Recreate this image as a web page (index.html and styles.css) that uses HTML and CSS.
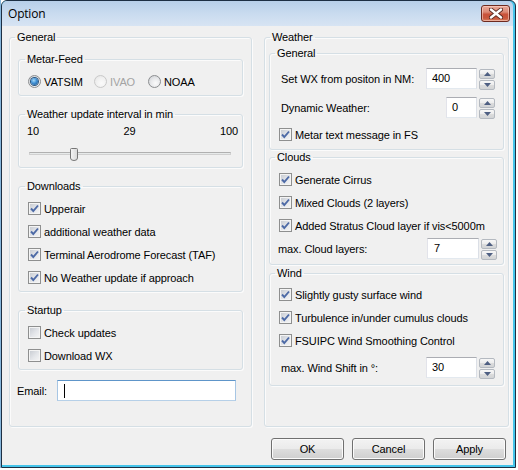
FILE: index.html
```html
<!DOCTYPE html>
<html>
<head>
<meta charset="utf-8">
<title>Option</title>
<link rel="stylesheet" href="styles.css">
</head>
<body>
<div class="window">
  <div class="frame">
    <div class="titlebar">
      <span class="title">Option</span>
      <div class="close">
        <svg width="14" height="11" viewBox="0 0 14 11">
          <path d="M2 1.5 L12 9.5 M12 1.5 L2 9.5" stroke="#5b2a22" stroke-width="4.2" stroke-linecap="round"/>
          <path d="M2 1.5 L12 9.5 M12 1.5 L2 9.5" stroke="#ffffff" stroke-width="2.4" stroke-linecap="round"/>
        </svg>
      </div>
    </div>
    <div class="client">
      <div class="columns">
        <fieldset class="group main general">
          <legend>General</legend>

          <fieldset class="group sub metar">
            <legend>Metar-Feed</legend>
            <div class="radios">
              <div class="opt o-vatsim"><span class="radio on"></span><span>VATSIM</span></div>
              <div class="opt o-ivao disabled"><span class="radio"></span><span>IVAO</span></div>
              <div class="opt"><span class="radio"></span><span>NOAA</span></div>
            </div>
          </fieldset>

          <fieldset class="group sub interval">
            <legend>Weather update interval in min</legend>
            <div class="scale"><span>10</span><span>29</span><span>100</span></div>
            <div class="slider">
              <div class="track"></div>
              <div class="thumb">
                <svg width="8" height="13" viewBox="0 0 8 13">
                  <defs>
                    <linearGradient id="tg" x1="0" y1="0" x2="1" y2="0">
                      <stop offset="0" stop-color="#f6f6f6"/>
                      <stop offset="1" stop-color="#d8d8d8"/>
                    </linearGradient>
                  </defs>
                  <path d="M1.5 0.5 H6.5 A1 1 0 0 1 7.5 1.5 V10 Q7.5 12.5 4 12.5 Q0.5 12.5 0.5 10 V1.5 A1 1 0 0 1 1.5 0.5 Z" fill="url(#tg)" stroke="#767676"/>
                </svg>
              </div>
            </div>
          </fieldset>

          <fieldset class="group sub downloads">
            <legend>Downloads</legend>
            <div class="check"><span class="cb on"><svg width="11" height="11" viewBox="0 0 11 11"><path d="M2 5.5 L4.3 8 L9 2.5" fill="none" stroke="#4d6aa6" stroke-width="1.9"/></svg></span><span>Upperair</span></div>
            <div class="check"><span class="cb on"><svg width="11" height="11" viewBox="0 0 11 11"><path d="M2 5.5 L4.3 8 L9 2.5" fill="none" stroke="#4d6aa6" stroke-width="1.9"/></svg></span><span>additional weather data</span></div>
            <div class="check"><span class="cb on"><svg width="11" height="11" viewBox="0 0 11 11"><path d="M2 5.5 L4.3 8 L9 2.5" fill="none" stroke="#4d6aa6" stroke-width="1.9"/></svg></span><span>Terminal Aerodrome Forecast (TAF)</span></div>
            <div class="check"><span class="cb on"><svg width="11" height="11" viewBox="0 0 11 11"><path d="M2 5.5 L4.3 8 L9 2.5" fill="none" stroke="#4d6aa6" stroke-width="1.9"/></svg></span><span>No Weather update if approach</span></div>
          </fieldset>

          <fieldset class="group sub startup">
            <legend>Startup</legend>
            <div class="check"><span class="cb"></span><span>Check updates</span></div>
            <div class="check"><span class="cb"></span><span>Download WX</span></div>
          </fieldset>

          <div class="email-row">
            <span class="email-label">Email:</span>
            <div class="textbox focused email"><span class="caret"></span></div>
          </div>
        </fieldset>

        <fieldset class="group main weather">
          <legend>Weather</legend>

          <fieldset class="group sub wgeneral">
            <legend>General</legend>
            <div class="field-row first">
              <span class="flabel">Set WX from positon in NM:</span>
              <div class="numbox"><div class="textbox w51">400</div><div class="spin"><span class="sb"><svg width="7" height="4" viewBox="0 0 7 4"><path d="M0 4 L3.5 0 L7 4 Z"/></svg></span><span class="sb"><svg width="7" height="4" viewBox="0 0 7 4"><path d="M0 0 L3.5 4 L7 0 Z"/></svg></span></div></div>
            </div>
            <div class="field-row second">
              <span class="flabel">Dynamic Weather:</span>
              <div class="numbox"><div class="textbox w31">0</div><div class="spin"><span class="sb"><svg width="7" height="4" viewBox="0 0 7 4"><path d="M0 4 L3.5 0 L7 4 Z"/></svg></span><span class="sb"><svg width="7" height="4" viewBox="0 0 7 4"><path d="M0 0 L3.5 4 L7 0 Z"/></svg></span></div></div>
            </div>
            <div class="check after-field"><span class="cb on"><svg width="11" height="11" viewBox="0 0 11 11"><path d="M2 5.5 L4.3 8 L9 2.5" fill="none" stroke="#4d6aa6" stroke-width="1.9"/></svg></span><span>Metar text message in FS</span></div>
          </fieldset>

          <fieldset class="group sub clouds">
            <legend>Clouds</legend>
            <div class="check"><span class="cb on"><svg width="11" height="11" viewBox="0 0 11 11"><path d="M2 5.5 L4.3 8 L9 2.5" fill="none" stroke="#4d6aa6" stroke-width="1.9"/></svg></span><span>Generate Cirrus</span></div>
            <div class="check"><span class="cb on"><svg width="11" height="11" viewBox="0 0 11 11"><path d="M2 5.5 L4.3 8 L9 2.5" fill="none" stroke="#4d6aa6" stroke-width="1.9"/></svg></span><span>Mixed Clouds (2 layers)</span></div>
            <div class="check"><span class="cb on"><svg width="11" height="11" viewBox="0 0 11 11"><path d="M2 5.5 L4.3 8 L9 2.5" fill="none" stroke="#4d6aa6" stroke-width="1.9"/></svg></span><span>Added Stratus Cloud layer if vis&lt;5000m</span></div>
            <div class="field-row cloud-row">
              <span class="flabel tight">max. Cloud layers:</span>
              <div class="numbox shifted"><div class="textbox w52">7</div><div class="spin"><span class="sb"><svg width="7" height="4" viewBox="0 0 7 4"><path d="M0 4 L3.5 0 L7 4 Z"/></svg></span><span class="sb"><svg width="7" height="4" viewBox="0 0 7 4"><path d="M0 0 L3.5 4 L7 0 Z"/></svg></span></div></div>
            </div>
          </fieldset>

          <fieldset class="group sub wind">
            <legend>Wind</legend>
            <div class="check"><span class="cb on"><svg width="11" height="11" viewBox="0 0 11 11"><path d="M2 5.5 L4.3 8 L9 2.5" fill="none" stroke="#4d6aa6" stroke-width="1.9"/></svg></span><span>Slightly gusty surface wind</span></div>
            <div class="check"><span class="cb on"><svg width="11" height="11" viewBox="0 0 11 11"><path d="M2 5.5 L4.3 8 L9 2.5" fill="none" stroke="#4d6aa6" stroke-width="1.9"/></svg></span><span>Turbulence in/under cumulus clouds</span></div>
            <div class="check"><span class="cb on"><svg width="11" height="11" viewBox="0 0 11 11"><path d="M2 5.5 L4.3 8 L9 2.5" fill="none" stroke="#4d6aa6" stroke-width="1.9"/></svg></span><span>FSUIPC Wind Smoothing Control</span></div>
            <div class="field-row wind-row">
              <span class="flabel">max. Wind Shift in °:</span>
              <div class="numbox"><div class="textbox w51">30</div><div class="spin"><span class="sb"><svg width="7" height="4" viewBox="0 0 7 4"><path d="M0 4 L3.5 0 L7 4 Z"/></svg></span><span class="sb"><svg width="7" height="4" viewBox="0 0 7 4"><path d="M0 0 L3.5 4 L7 0 Z"/></svg></span></div></div>
            </div>
          </fieldset>
        </fieldset>
      </div>

      <div class="buttons">
        <div class="btn">OK</div>
        <div class="btn">Cancel</div>
        <div class="btn">Apply</div>
      </div>
    </div>
  </div>
</div>
</body>
</html>
```
FILE: styles.css
```css
html, body {
  margin: 0;
  padding: 0;
  background: #ffffff;
}

body {
  font-family: "Liberation Sans", Arial, sans-serif;
  font-size: 11px;
  letter-spacing: -0.1px;
  color: #000;
}

.window {
  width: 516px;
  height: 468px;
  box-sizing: border-box;
  border-left: 1px solid #86b6dc;
}

.frame {
  height: 100%;
  box-sizing: border-box;
  border: 1px solid #1d2f43;
  border-radius: 6px 6px 0 0;
  background: #45c4ea;
  padding: 0 2px 2px 0;
  display: flex;
  flex-direction: column;
}

.titlebar {
  height: 25px;
  flex: none;
  display: flex;
  justify-content: space-between;
  align-items: flex-start;
  background: linear-gradient(to bottom, #b7cfe9 0%, #c9dbef 50%, #d7e4f3 100%);
  border-radius: 5px 5px 0 0;
}

.title {
  font-family: "Open Sans", "Noto Sans", sans-serif;
  font-size: 12px;
  letter-spacing: -0.2px;
  line-height: 16px;
  margin: 5px 0 0 6px;
  color: #000;
}

.close {
  width: 29px;
  height: 17px;
  box-sizing: border-box;
  margin: 4px 3px 0 0;
  border: 1px solid #6e2a1f;
  border-radius: 3px;
  background: linear-gradient(to bottom, #e9a899 0%, #dc8a76 40%, #c9523a 55%, #c8563c 80%, #d77e5e 100%);
  box-shadow: inset 0 0 0 1px rgba(255, 220, 210, 0.55);
  display: flex;
  align-items: center;
  justify-content: center;
}

.client {
  flex: 1;
  background: #f0f0f0;
  padding: 5px 4px 0 7px;
  display: flex;
  flex-direction: column;
}

.columns {
  height: 396px;
  display: flex;
  gap: 12px;
}

.group {
  margin: 0;
  min-width: 0;
  border: 1px solid #d5dfe5;
  border-radius: 3px;
  box-shadow: inset 1px 1px 0 #fbfbfb, 1px 1px 0 #fbfbfb;
}

.group legend {
  padding: 0 2px;
  line-height: 13px;
  height: 13px;
}

.main.general {
  width: 243px;
  box-sizing: border-box;
  padding: 9px 8px 0 8px;
}

.main.general > legend {
  margin-left: -3px;
}

.main.weather {
  width: 245px;
  box-sizing: border-box;
  padding: 3px 4px 0 4px;
}

.main.weather > legend {
  margin-left: 1px;
}

.sub {
  padding: 0 4px 0 9px;
}

.general .sub > legend {
  margin-left: -3px;
}

.weather .sub > legend {
  margin-left: -4px;
}

.weather .sub {
  padding-right: 8px;
}

/* Metar feed */
.metar {
  padding-top: 7px;
  padding-bottom: 5px;
}

.radios {
  display: flex;
  height: 17px;
  align-items: center;
}

.opt {
  display: flex;
  align-items: center;
  gap: 3px;
}

.o-vatsim {
  width: 66px;
}

.o-ivao {
  width: 54px;
}

.opt.disabled {
  color: #a3a3a3;
}

.radio {
  width: 13px;
  height: 13px;
  box-sizing: border-box;
  border-radius: 50%;
  border: 1px solid #8c8e90;
  background: radial-gradient(circle at 60% 65%, #fbfbfb 0%, #e9eaec 45%, #c9ccd1 100%);
  display: flex;
  align-items: center;
  justify-content: center;
}

.opt.disabled .radio {
  border-color: #c9c9c9;
  background: radial-gradient(circle at 60% 65%, #fbfbfb 0%, #f1f1f1 50%, #e2e2e2 100%);
}

.radio.on::after {
  content: "";
  width: 7px;
  height: 7px;
  border-radius: 50%;
  background: radial-gradient(circle at 40% 35%, #a7dcfb 0%, #3f8fd4 45%, #1a4f85 100%);
  box-shadow: 0 0 0 1px #2a5680;
}

/* interval */
.interval {
  margin-top: 12px;
  padding-top: 4px;
  padding-bottom: 0;
}

.scale {
  display: flex;
  justify-content: space-between;
  line-height: 13px;
  margin-left: -1px;
}

.slider {
  position: relative;
  height: 29px;
}

.track {
  position: absolute;
  left: 1px;
  top: 14px;
  width: 202px;
  height: 3px;
  box-sizing: border-box;
  border: 1px solid #d0d0d0;
  border-top-color: #b0b0b0;
  background: #e7eaea;
}

.thumb {
  position: absolute;
  left: 42px;
  top: 10px;
  width: 8px;
  height: 13px;
}

.thumb svg {
  display: block;
}

/* checkboxes */
.check {
  display: flex;
  align-items: center;
  height: 23px;
  gap: 3px;
}

.cb {
  width: 13px;
  height: 13px;
  box-sizing: border-box;
  border: 1px solid #8e8f8f;
  background: linear-gradient(135deg, #c4c8cf 0%, #e4e6ea 55%, #f6f6f6 100%);
  box-shadow: inset 0 0 0 1px #f4f4f4;
  display: flex;
  align-items: center;
  justify-content: center;
}

.cb svg {
  display: block;
}

.downloads {
  margin-top: 12px;
  padding-top: 4px;
  padding-bottom: 2px;
}

.startup {
  margin-top: 12px;
  padding-top: 4px;
  padding-bottom: 2px;
}

/* email */
.email-row {
  margin-top: 10px;
  margin-left: -1px;
  display: flex;
  align-items: center;
  height: 21px;
}

.email-label {
  width: 40px;
}

.textbox {
  height: 21px;
  box-sizing: border-box;
  background: #ffffff;
  border: 1px solid;
  border-color: #abadb3 #dbdfe6 #e3e9ef #e2e3ea;
  padding-left: 5px;
  line-height: 19px;
  display: flex;
  align-items: center;
}

.textbox.focused {
  border-color: #5e95c9 #a7c6e4 #b6d0e8 #a7c6e4;
}

.email {
  width: 179px;
}

.caret {
  width: 1px;
  height: 14px;
  background: #000;
  margin-left: 1px;
}

/* right side */
.wgeneral {
  padding-top: 8px;
  padding-bottom: 3px;
}

.field-row {
  display: flex;
  align-items: center;
  justify-content: space-between;
  height: 21px;
}

.field-row.second {
  margin-top: 8px;
}

.check.after-field {
  margin-top: 5px;
}

.flabel {
  margin-left: 2px;
}

.flabel.tight {
  margin-left: -1px;
}

.numbox {
  display: flex;
  align-items: flex-start;
  gap: 2px;
}

.numbox.shifted {
  margin-right: -2px;
}

.w51 { width: 51px; }
.w31 { width: 31px; padding-left: 5px; }
.w52 { width: 52px; padding-left: 6px; }

.spin {
  display: flex;
  flex-direction: column;
  gap: 1px;
  padding-top: 1px;
}

.sb {
  width: 16px;
  height: 10px;
  box-sizing: border-box;
  border: 1px solid #b4b9c0;
  border-radius: 2px;
  background: linear-gradient(to bottom, #f7f7f7 0%, #ececec 50%, #dcdcdc 51%, #d2d4d6 100%);
  display: flex;
  align-items: center;
  justify-content: center;
}

.sb svg {
  display: block;
  fill: #4e5f82;
}

.clouds {
  margin-top: 1px;
  padding-top: 4px;
  padding-bottom: 5px;
}

.cloud-row {
  margin-top: 1px;
}

.wind {
  margin-top: 2px;
  padding-top: 3px;
  padding-bottom: 7px;
}

.wind-row {
  margin-top: 5px;
}

/* buttons */
.buttons {
  margin-top: 11px;
  display: flex;
  justify-content: flex-end;
  gap: 8px;
  padding-right: 3px;
}

.btn {
  width: 73px;
  height: 22px;
  box-sizing: border-box;
  border: 1px solid #707070;
  border-radius: 3px;
  background: linear-gradient(to bottom, #f3f3f3 0%, #ebebeb 48%, #dddddd 52%, #cfcfcf 100%);
  box-shadow: inset 0 0 0 1px #fbfbfb;
  display: flex;
  align-items: center;
  justify-content: center;
}
```
